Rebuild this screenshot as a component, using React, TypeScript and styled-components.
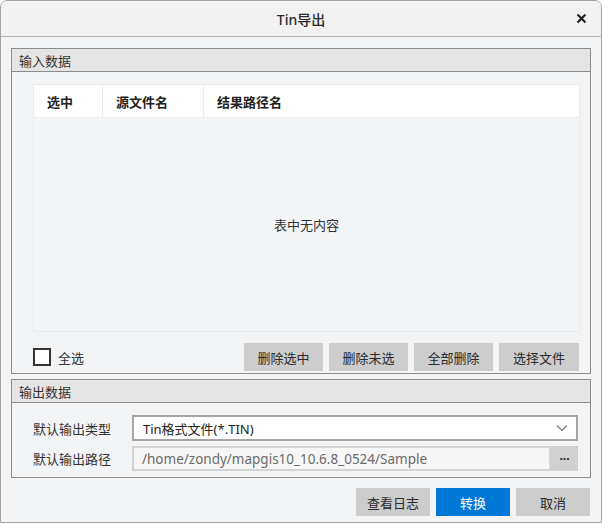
import React, { useState } from 'react';
import styled, { createGlobalStyle } from 'styled-components';

const GlobalStyle = createGlobalStyle`
	html, body {
		margin: 0;
		padding: 0;
		background: #ffffff;
	}
	* {
		box-sizing: border-box;
	}
	body {
		font-family: 'Noto Sans', 'Noto Sans CJK SC', sans-serif;
		font-size: 13px;
		color: #222;
	}
`;

const Window = styled.div`
	width: 602px;
	height: 523px;
	border: 1px solid #a3a3a3;
	border-radius: 7px 7px 0 0;
	background: #f3f4f6;
	display: flex;
	flex-direction: column;
	overflow: hidden;
`;

const TitleBar = styled.div`
	height: 36px;
	flex-shrink: 0;
	background: #f2f2f2;
	border-bottom: 1px solid #b4b4b4;
	display: flex;
	align-items: center;
	justify-content: center;
	position: relative;
	font-size: 14px;
	font-weight: 500;
	color: #2a2a2a;
`;

const CloseButton = styled.button`
	position: absolute;
	right: 12px;
	top: 9px;
	width: 16px;
	height: 16px;
	padding: 0;
	border: none;
	background: transparent;
	display: flex;
	align-items: center;
	justify-content: center;
	cursor: pointer;
`;

const Content = styled.div`
	padding: 11px 10px 0 10px;
	display: flex;
	flex-direction: column;
	gap: 5px;
`;

const GroupBox = styled.div`
	border: 1px solid #8c8c8c;
	background: #f3f4f6;
`;

const GroupHeader = styled.div`
	height: 23px;
	background: #e5e5e5;
	border-bottom: 1px solid #8c8c8c;
	display: flex;
	align-items: center;
	padding-left: 7px;
	color: #333;
`;

const InputBody = styled.div`
	padding: 12px 10px 2px 21px;
	display: flex;
	flex-direction: column;
	gap: 11px;
`;

const Table = styled.div`
	height: 248px;
	display: flex;
	flex-direction: column;
	border: 1px solid #e9eaec;
`;

const HeaderRow = styled.div`
	height: 33px;
	flex-shrink: 0;
	background: #ffffff;
	border-bottom: 1px solid #e9eaec;
	display: flex;
`;

const HeaderCell = styled.div<{ $width?: number }>`
	${(p) => (p.$width ? `width: ${p.$width}px;` : 'flex: 1;')}
	display: flex;
	align-items: center;
	padding-left: 13px;
	font-weight: 700;
	color: #222;
	border-right: ${(p) => (p.$width ? '1px solid #ececec' : 'none')};
`;

const EmptyBody = styled.div`
	flex: 1;
	background: #f4f5f7;
	display: flex;
	align-items: center;
	justify-content: center;
	color: #333;
`;

const ActionRow = styled.div`
	display: flex;
	align-items: center;
	height: 28px;
	gap: 6px;
	padding-right: 1px;
`;

const CheckLabel = styled.label`
	display: flex;
	align-items: center;
	gap: 7px;
	margin-right: auto;
	color: #333;
	cursor: pointer;
`;

const CheckBox = styled.span<{ $checked: boolean }>`
	width: 18px;
	height: 18px;
	border: 2px solid #333;
	background: ${(p) => (p.$checked ? '#0078d7' : '#ffffff')};
	display: inline-block;
`;

const GrayButton = styled.button<{ $width?: number }>`
	width: ${(p) => p.$width ?? 79}px;
	height: 28px;
	border: none;
	background: #cdcdcd;
	color: #2a2a2a;
	font-family: inherit;
	font-size: 13px;
	padding: 0;
	cursor: pointer;
`;

const PrimaryButton = styled(GrayButton)`
	background: #0078d7;
	color: #ffffff;
`;

const OutputBody = styled.div`
	padding: 12px 12px 6px 21px;
	display: flex;
	flex-direction: column;
	gap: 5px;
`;

const FieldRow = styled.div`
	display: flex;
	align-items: center;
`;

const FieldLabel = styled.div`
	width: 99px;
	color: #333;
`;

const Combo = styled.div`
	flex: 1;
	height: 26px;
	background: #ffffff;
	border: 2px solid #a6a6a6;
	display: flex;
	align-items: center;
	justify-content: space-between;
	padding: 0 8px 0 9px;
	color: #222;
`;

const PathWrap = styled.div`
	flex: 1;
	height: 25px;
	display: flex;
`;

const PathInput = styled.div`
	flex: 1;
	background: #f7f7f7;
	border: 2px solid #d4d4d4;
	display: flex;
	align-items: center;
	padding-left: 8px;
	color: #6a6a6a;
	font-size: 13.5px;
`;

const BrowseButton = styled.button`
	width: 27px;
	border: none;
	background: #d0d0d0;
	padding: 0;
	font-family: inherit;
	font-size: 12px;
	font-weight: 700;
	color: #222;
	line-height: 1;
	cursor: pointer;
`;

const Footer = styled.div`
	display: flex;
	justify-content: flex-end;
	gap: 6px;
	padding: 10px 11px 0 0;
`;

export default function App() {
	const [all, setAll] = useState(false);

	return (
		<>
			<GlobalStyle />
			<Window>
				<TitleBar>
					Tin导出
					<CloseButton aria-label="close">
						<svg width="11" height="11" viewBox="0 0 11 11">
							<path d="M1.5 1.5 L9.5 9.5 M9.5 1.5 L1.5 9.5" stroke="#222" strokeWidth="2.2" />
						</svg>
					</CloseButton>
				</TitleBar>
				<Content>
					<GroupBox>
						<GroupHeader>输入数据</GroupHeader>
						<InputBody>
							<Table>
								<HeaderRow>
									<HeaderCell $width={69}>选中</HeaderCell>
									<HeaderCell $width={101}>源文件名</HeaderCell>
									<HeaderCell>结果路径名</HeaderCell>
								</HeaderRow>
								<EmptyBody>表中无内容</EmptyBody>
							</Table>
							<ActionRow>
								<CheckLabel onClick={() => setAll(!all)}>
									<CheckBox $checked={all} />
									全选
								</CheckLabel>
								<GrayButton>删除选中</GrayButton>
								<GrayButton>删除未选</GrayButton>
								<GrayButton>全部删除</GrayButton>
								<GrayButton $width={80}>选择文件</GrayButton>
							</ActionRow>
						</InputBody>
					</GroupBox>
					<GroupBox>
						<GroupHeader>输出数据</GroupHeader>
						<OutputBody>
							<FieldRow>
								<FieldLabel>默认输出类型</FieldLabel>
								<Combo>
									<span>Tin格式文件(*.TIN)</span>
									<svg width="12" height="8" viewBox="0 0 12 8">
										<path d="M1 1.5 L6 6.5 L11 1.5" fill="none" stroke="#777" strokeWidth="1.2" />
									</svg>
								</Combo>
							</FieldRow>
							<FieldRow>
								<FieldLabel>默认输出路径</FieldLabel>
								<PathWrap>
									<PathInput>/home/zondy/mapgis10_10.6.8_0524/Sample</PathInput>
									<BrowseButton>···</BrowseButton>
								</PathWrap>
							</FieldRow>
						</OutputBody>
					</GroupBox>
				</Content>
				<Footer>
					<GrayButton $width={74}>查看日志</GrayButton>
					<PrimaryButton $width={74}>转换</PrimaryButton>
					<GrayButton $width={74}>取消</GrayButton>
				</Footer>
			</Window>
		</>
	);
}
